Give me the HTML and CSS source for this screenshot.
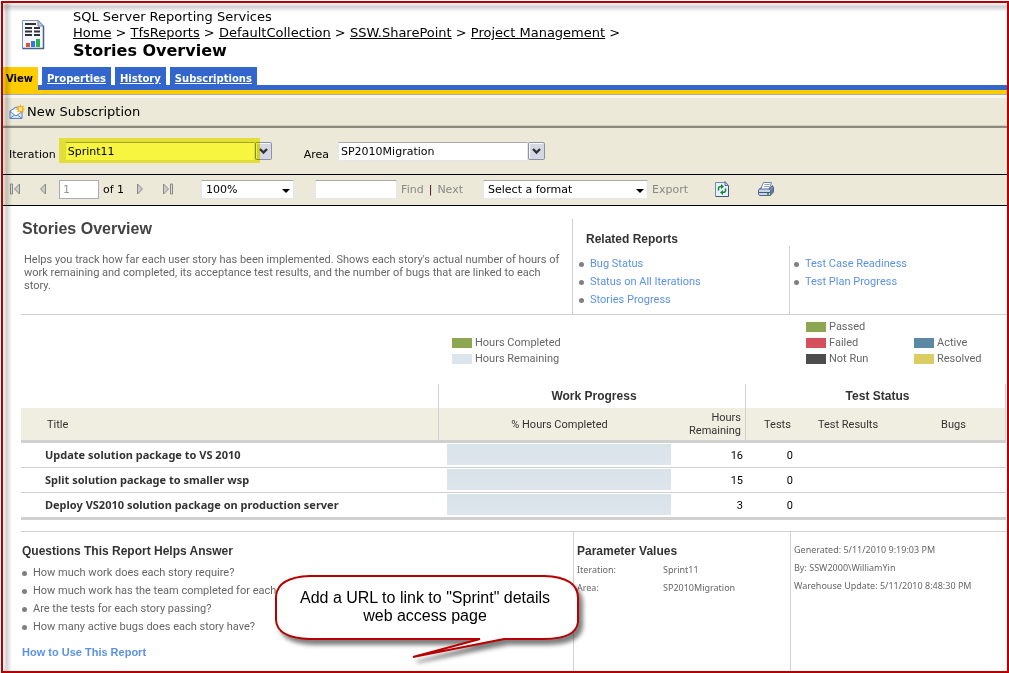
FILE: index.html
```html
<!DOCTYPE html>
<html lang="en">
<head>
<meta charset="utf-8">
<title>Stories Overview - SQL Server Reporting Services</title>
<link rel="stylesheet" href="styles.css">
</head>
<body>
<div class="frame">
  <header class="site-header">
    <svg class="report-icon" viewBox="0 0 24 31" aria-hidden="true">
      <path d="M1.500 1.500H17L22.500 7V29.500H1.500Z" fill="#f4f7ff" stroke="#7f93c0"/>
      <path d="M22.500 7V29.500H1.500" fill="none" stroke="#4a608c" stroke-width="1.500"/>
      <path d="M17 1.500V7H22.500Z" fill="#c3d0e8" stroke="#6d80a8"/>
      <path d="M4 5H15M4 9H11M4 12.500H11M4 16H11M13 9H19M13 12.500H19M13 16H19" stroke="#333" stroke-width="1.800"/>
      <path d="M5 24H9V28H5Z" fill="#e8502a"/><path d="M10 22H14V28H10Z" fill="#2b7be0"/><path d="M15 20H19V28H15Z" fill="#2fae4a"/>
    </svg>
    <div>
      <p class="site-name">SQL Server Reporting Services</p>
      <nav class="crumbs" aria-label="Breadcrumb"><a href="#">Home</a> &gt; <a href="#">TfsReports</a> &gt; <a href="#">DefaultCollection</a> &gt; <a href="#">SSW.SharePoint</a> &gt; <a href="#">Project Management</a> &gt;</nav>
      <h1 class="page-title">Stories Overview</h1>
    </div>
  </header>

  <nav class="tabs" aria-label="Report">
    <a class="tab tab-active" href="#">View</a>
    <a class="tab" href="#">Properties</a>
    <a class="tab" href="#">History</a>
    <a class="tab" href="#">Subscriptions</a>
  </nav>

  <div class="actions">
    <button class="action" type="button">
      <svg class="mail-icon" viewBox="0 0 16 16" aria-hidden="true">
        <path d="M1 7L7 3L13 7V14.500H1Z" fill="#d9e8fa" stroke="#5a82bd"/>
        <path d="M3 6H11V10L7 12L3 10Z" fill="#fff"/>
        <path d="M1 7.500L7 12L13 7.500M1 14.500L5.500 11M13 14.500L8.500 11" fill="none" stroke="#5a82bd"/>
        <path d="M11.500 0L12.500 2.500L15 1.500L14 4L16 5L14 6.200L15 8.500L12.500 7.500L11.500 10L10.500 7.500L8 8.500L9 6.200L7 5L9 4L8 1.500L10.500 2.500Z" fill="#f3a71e"/>
        <circle cx="11.500" cy="5" r="2" fill="#ffec7a"/>
      </svg>
      New Subscription
    </button>
  </div>

  <form class="params">
    <div class="param param-marked">
      <label for="iteration">Iteration</label>
      <span class="combo">
        <select id="iteration"><option>Sprint11</option></select>
        <svg class="combo-button" viewBox="0 0 17 18" aria-hidden="true"><rect x=".5" y=".5" width="16" height="17" rx="1" fill="#d5d7e4" stroke="#8c91a5"/><path d="M1.500 16V1.500H15" fill="none" stroke="#f7f8fc"/><path d="M5 7L8.500 10.500L12 7" fill="none" stroke="#333" stroke-width="2.400"/></svg>
      </span>
    </div>
    <div class="param">
      <label for="area">Area</label>
      <span class="combo">
        <select id="area"><option>SP2010Migration</option></select>
        <svg class="combo-button" viewBox="0 0 17 18" aria-hidden="true"><rect x=".5" y=".5" width="16" height="17" rx="1" fill="#d5d7e4" stroke="#8c91a5"/><path d="M1.500 16V1.500H15" fill="none" stroke="#f7f8fc"/><path d="M5 7L8.500 10.500L12 7" fill="none" stroke="#333" stroke-width="2.400"/></svg>
      </span>
    </div>
  </form>

  <div class="toolbar">
    <div class="pager">
      <button type="button" aria-label="First page"><svg width="12" height="12" viewBox="0 0 12 12"><path d="M1.500 1H3.500V11H1.500Z" fill="#ddd" stroke="#888"/><path d="M10.500 1V11L5.500 6Z" fill="#ccc" stroke="#888"/></svg></button>
      <button type="button" aria-label="Previous page"><svg width="12" height="12" viewBox="0 0 12 12"><path d="M8.500 1V11L3.500 6Z" fill="#ccc" stroke="#888"/></svg></button>
      <input class="field page-field" type="text" value="1" aria-label="Page">
      <span class="page-count">of 1</span>
      <button type="button" aria-label="Next page"><svg width="12" height="12" viewBox="0 0 12 12"><path d="M3.500 1V11L8.500 6Z" fill="#ccc" stroke="#888"/></svg></button>
      <button type="button" aria-label="Last page"><svg width="12" height="12" viewBox="0 0 12 12"><path d="M8.500 1H10.500V11H8.500Z" fill="#ddd" stroke="#888"/><path d="M1.500 1V11L6.500 6Z" fill="#ccc" stroke="#888"/></svg></button>
    </div>
    <span class="drop zoom-drop">
      <select aria-label="Zoom"><option>100%</option></select>
      <svg class="drop-arrow" viewBox="0 0 8 4" aria-hidden="true"><path d="M0 0H8L4 4Z"/></svg>
    </span>
    <div class="search">
      <input class="field find-field" type="text" aria-label="Find text">
      <button class="text-button" type="button">Find</button><span class="divider">|</span><button class="text-button" type="button">Next</button>
    </div>
    <div class="export">
      <span class="drop format-drop">
        <select aria-label="Export format"><option>Select a format</option></select>
        <svg class="drop-arrow" viewBox="0 0 8 4" aria-hidden="true"><path d="M0 0H8L4 4Z"/></svg>
      </span>
      <button class="text-button" type="button">Export</button>
    </div>
    <div class="tools">
      <button type="button" aria-label="Refresh"><svg width="14" height="16" viewBox="0 0 14 16"><path d="M.5 1.500H10L13.500 4.500V15.500H.5Z" fill="#e9effa" stroke="#7288b5"/><path d="M10 .5V4.500H13.500Z" fill="#c2cee4" stroke="#5f7097"/><path d="M13.500 5V15.500H1" fill="none" stroke="#425580"/><path d="M3.500 9.500V7.500Q3.500 5.500 6 5.500M10.500 7.500V9.500Q10.500 11.500 8 11.500" fill="none" stroke="#128a36" stroke-width="1.500"/><path d="M6 3L9 5.500L6 8ZM8 9L5 11.500L8 14Z" fill="#128a36"/></svg></button>
      <button type="button" aria-label="Print"><svg width="16" height="16" viewBox="0 0 16 16"><path d="M5.500 1.500H13.500L11 8.500H2.500Z" fill="#fff" stroke="#6b7fa3"/><path d="M6.500 3.500H11.500M5.800 5.500H10.800" stroke="#8fa2c4"/><path d="M1 8.500L3.500 6.500M11 8.500L14.500 4.500L15.500 7V11L12 14.500" fill="#8093b5" stroke="#4b5e83"/><path d="M.5 9Q1 8 2 8H11L12.500 9.500V14.500H1.500L.5 13Z" fill="#c9d5e9" stroke="#52668e"/><path d="M1 11.500H12" stroke="#435579"/><path d="M9 12H11V14H9Z" fill="#35a850"/><path d="M12.500 9.500L15.500 6.500V11L12.500 14.500Z" fill="#63779f"/></svg></button>
    </div>
  </div>

  <main class="report">
    <section class="intro">
      <div class="summary">
        <h2 class="report-title">Stories Overview</h2>
        <p class="summary-text">Helps you track how far each user story has been implemented. Shows each story's actual number of hours of work remaining and completed, its acceptance test results, and the number of bugs that are linked to each story.</p>
      </div>
      <div class="related">
        <h3 class="section-title">Related Reports</h3>
        <ul class="bullets">
          <li><a href="#">Bug Status</a></li>
          <li><a href="#">Status on All Iterations</a></li>
          <li><a href="#">Stories Progress</a></li>
        </ul>
      </div>
      <ul class="bullets related-more">
        <li><a href="#">Test Case Readiness</a></li>
        <li><a href="#">Test Plan Progress</a></li>
      </ul>
    </section>

    <div class="legends">
      <ul class="legend">
        <li><i class="swatch green"></i>Hours Completed</li>
        <li><i class="swatch pale"></i>Hours Remaining</li>
      </ul>
      <ul class="legend">
        <li><i class="swatch green"></i>Passed</li>
        <li><i class="swatch red"></i>Failed</li>
        <li><i class="swatch dark"></i>Not Run</li>
      </ul>
      <ul class="legend">
        <li><i class="swatch blue"></i>Active</li>
        <li><i class="swatch yellow"></i>Resolved</li>
      </ul>
    </div>

    <table class="stories">
      <colgroup><col><col class="col-chart"><col class="col-hours"><col class="col-tests"><col class="col-results"><col class="col-bugs"></colgroup>
      <thead>
        <tr class="groups"><td></td><th colspan="2">Work Progress</th><th colspan="3">Test Status</th></tr>
        <tr class="heads"><th class="title-head">Title</th><th class="group-start">% Hours Completed</th><th class="hours-head">Hours<br>Remaining</th><th class="group-start">Tests</th><th class="results-head">Test Results</th><th class="group-end">Bugs</th></tr>
      </thead>
      <tbody>
        <tr><th>Update solution package to VS 2010</th><td class="chart"><div class="bar"></div></td><td class="hours">16</td><td class="tests">0</td><td></td><td></td></tr>
        <tr><th>Split solution package to smaller wsp</th><td class="chart"><div class="bar"></div></td><td class="hours">15</td><td class="tests">0</td><td></td><td></td></tr>
        <tr><th>Deploy VS2010 solution package on production server</th><td class="chart"><div class="bar"></div></td><td class="hours">3</td><td class="tests">0</td><td></td><td></td></tr>
      </tbody>
    </table>

    <section class="details">
      <div class="questions">
        <h3 class="section-title">Questions This Report Helps Answer</h3>
        <ul class="bullets">
          <li>How much work does each story require?</li>
          <li>How much work has the team completed for each story?</li>
          <li>Are the tests for each story passing?</li>
          <li>How many active bugs does each story have?</li>
        </ul>
        <a class="how-to" href="#">How to Use This Report</a>
      </div>
      <div class="values">
        <h3 class="section-title">Parameter Values</h3>
        <dl class="pairs"><dt>Iteration:</dt><dd>Sprint11</dd><dt>Area:</dt><dd>SP2010Migration</dd></dl>
      </div>
      <div class="meta">
        <p>Generated: 5/11/2010 9:19:03 PM</p>
        <p>By: SSW2000\WilliamYin</p>
        <p>Warehouse Update: 5/11/2010 8:48:30 PM</p>
      </div>
    </section>
  </main>

  <aside class="callout">
    <svg class="callout-shape" viewBox="0 0 310 92" aria-hidden="true">
      <path d="M36 2H270Q304 3 304 24V48Q302 65 270 65H230L139 83L206 65H36Q3 64 2 46V22Q4 3 36 2Z" fill="#fff" stroke="#b80000" stroke-width="2"/>
    </svg>
    <p class="callout-text">Add a URL to link to "Sprint" details<br>web access page</p>
  </aside>
</div>
</body>
</html>
```
FILE: styles.css
```css
* { box-sizing: border-box; }

body {
  margin: 1px 0 0 1px;
  background: #fff;
  color: #000;
  font: 11px/13px "DejaVu Sans", Verdana, sans-serif;
}

h1, h2, h3, p, ul, dl, dd { margin: 0; padding: 0; }
ul { list-style: none; }

button {
  padding: 0;
  border: 0;
  background: none;
  color: inherit;
  font: inherit;
}
button svg { display: block; }

.frame {
  position: relative;
  display: flex;
  flex-direction: column;
  min-height: calc(100vh - 1px);
  border: 2px solid #b80000;
}
.frame::before,
.frame::after {
  content: "";
  position: absolute;
  top: 0;
  left: 0;
  pointer-events: none;
}
.frame::before {
  width: 9px;
  height: 100%;
  background: linear-gradient(90deg, rgba(0,0,0,.02), rgba(0,0,0,.18) 40%, rgba(0,0,0,0));
}
.frame::after {
  width: 100%;
  height: 9px;
  background: linear-gradient(rgba(0,0,0,.02), rgba(0,0,0,.18) 40%, rgba(0,0,0,0));
}

/* Header */
.site-header {
  display: flex;
  gap: 28px;
  padding: 6px 0 7px 18px;
  font-size: 13px;
  line-height: 16px;
}
.report-icon { width: 24px; height: 31px; margin-top: 10px; }
.crumbs a { color: #000; }
.page-title { font-size: 16px; line-height: 19px; }

/* Tabs */
.tabs {
  display: flex;
  gap: 4px;
  padding-bottom: 5px;
  background: linear-gradient(#36c, #36c) bottom / 100% 5px no-repeat;
  border-bottom: 4px solid #fc0;
}
.tab {
  height: 18px;
  padding: 0 5px;
  background: #36c;
  color: #fff;
  font-size: 10px;
  font-weight: bold;
  line-height: 23px;
}
.tab-active {
  height: 23px;
  margin-bottom: -5px;
  padding: 0 5px 0 3px;
  background: #fc0;
  color: #000;
  text-decoration: none;
}

/* Subscription bar */
.actions {
  padding: 7px 6px 4px;
  background: #ece9d8;
  border-top: 1px solid #aaa;
  border-bottom: 2px solid #8c8a80;
  box-shadow: inset 0 3px #f7f6ee, inset 0 -1px #d0cdbb;
}
.action {
  display: flex;
  align-items: center;
  gap: 2px;
  font-size: 13px;
  line-height: 20px;
}
.mail-icon { width: 16px; height: 16px; }

/* Parameters */
.params {
  display: flex;
  gap: 32px;
  padding: 13px 6px;
  background: #ece9d8;
  border-bottom: 1px solid #000;
}
.param {
  position: relative;
  display: flex;
  gap: 9px;
  height: 20px;
}
.param label { padding-top: 7px; }
.combo { display: flex; align-items: center; }
.combo select {
  appearance: none;
  width: 190px;
  height: 19px;
  padding: 0 2px;
  border: 1px solid #e3e6ee;
  border-top-color: #aaa;
  border-radius: 0;
  background: #fff;
  color: #000;
  font: inherit;
}
.combo-button { width: 17px; height: 18px; pointer-events: none; }
.param-marked::after {
  content: "";
  position: absolute;
  top: -3px;
  right: 12px;
  width: 201px;
  height: 25px;
  background: #f7f53f;
  mix-blend-mode: multiply;
  pointer-events: none;
}

/* Viewer toolbar */
.toolbar {
  display: flex;
  align-items: center;
  height: 31px;
  padding: 0 6px 2px;
  background: #ece9d8;
  border-bottom: 1px solid #000;
}
.pager, .search, .export, .tools { display: flex; align-items: center; }
.pager button + button { margin: 0 10px 0 16px; }
.page-count { margin: 0 10px 0 4px; }
.field {
  height: 19px;
  padding: 0 3px;
  border: 1px solid #e3e6ee;
  border-top-color: #aaa;
  font: inherit;
}
.page-field { width: 40px; border-color: #aab; color: #999; }
.find-field { width: 82px; }
.divider { margin: 0 1px; color: #402; }
.drop { position: relative; display: flex; }
.drop select {
  appearance: none;
  width: 100%;
  height: 19px;
  padding: 0 4px;
  border: 1px solid #e3e6ee;
  border-top-color: #aaa;
  border-radius: 0;
  background: #fff;
  color: #000;
  font: inherit;
}
.drop-arrow {
  position: absolute;
  top: 9px;
  right: 4px;
  width: 8px;
  height: 4px;
  pointer-events: none;
}
.zoom-drop { width: 93px; margin: 0 21px 0 17px; }
.format-drop { width: 165px; }
.text-button { padding: 0 4px; color: #888; }
.export { margin-left: 16px; }
.tools { gap: 29px; margin-left: 23px; }

/* Report */
.report {
  display: flex;
  flex: 1;
  flex-direction: column;
  padding-left: 18px;
  color: #666;
  font: 11px/13px Roboto, Tahoma, sans-serif;
}
.section-title {
  color: #333;
  font: bold 12px/14px "Liberation Sans", Arial, sans-serif;
}
.intro, .details { display: grid; }
.intro {
  grid-template-columns: 551fr 217fr 218fr;
  padding-top: 13px;
  border-bottom: 1px solid #d0d0d0;
}
.report-title {
  margin-left: 1px;
  color: #444;
  font: bold 16px/20px "Liberation Sans", Arial, sans-serif;
}
.summary-text { padding: 14px 10px 0 3px; }
.related { padding: 13px 0 5px; border-left: 1px solid #d0d0d0; }
.related .section-title { margin: 0 0 9px 13px; }
.bullets li {
  display: flex;
  align-items: center;
  gap: 6px;
  line-height: 18px;
}
.bullets li::before {
  content: "";
  width: 5px;
  height: 5px;
  border-radius: 50%;
  background: #808080;
}
.related .bullets { padding-left: 6px; }
.related-more {
  margin-top: 27px;
  padding: 9px 0 0 4px;
  border-left: 1px solid #d0d0d0;
}
.bullets a { color: #5b92e5; text-decoration: none; }

.legends {
  display: grid;
  grid-template-columns: 354fr 108fr 93fr;
  align-items: end;
  padding: 4px 0 17px 431px;
}
.legend li { display: flex; align-items: center; gap: 3px; line-height: 16px; }
.swatch { width: 20px; height: 10px; }
.green { background: #8da651; }
.pale { background: #dce5eb; }
.red { background: #d4505b; }
.dark { background: #4d4d4d; }
.blue { background: #5b88a5; }
.yellow { background: #dbcd63; }

.stories {
  width: calc(100% - 1px);
  border-collapse: separate;
  border-spacing: 0;
  table-layout: fixed;
}
.col-chart { width: 242px; }
.col-hours { width: 65px; }
.col-tests { width: 64px; }
.col-results { width: 93px; }
.col-bugs { width: 104px; }
.stories th, .stories td { padding: 0; }
.groups th {
  height: 24px;
  border-left: 1px solid #d0d0d0;
  color: #333;
  font: bold 12px/14px "Liberation Sans", Arial, sans-serif;
}
.groups th:last-child, .stories .group-end { border-right: 1px solid #d0d0d0; }
.stories .groups th { padding-left: 4px; }
.heads th {
  height: 35px;
  background: #f0eee1;
  border-bottom: 3px solid #d0d0d0;
  color: #333;
  font-weight: normal;
}
.stories .group-start { border-left: 1px solid #d0d0d0; }
.stories .title-head { padding-left: 26px; text-align: left; }
.stories .hours-head { padding-right: 4px; text-align: right; }
.stories .results-head { padding-right: 15px; }
.stories tbody th, .stories tbody td {
  height: 25px;
  border-bottom: 1px solid #d0d0d0;
  color: #000;
}
.stories tbody tr:last-child > * { height: 27px; border-bottom-width: 3px; }
.stories tbody th {
  padding: 0 0 2px 24px;
  color: #333;
  font-family: "Noto Sans", Tahoma, sans-serif;
  text-align: left;
}
.stories .chart { padding: 0 9px 2px; vertical-align: middle; }
.bar { height: 21px; background: linear-gradient(#d8e3e9, #dee5ed); }
.stories .hours { padding-right: 2px; text-align: right; }
.stories .tests { padding-right: 16px; text-align: right; }

.details {
  flex: 1;
  grid-template-columns: 552fr 217fr 217fr;
  margin-top: 11px;
  border-top: 1px solid #d0d0d0;
}
.questions { padding: 12px 0 10px 1px; }
.questions .bullets { margin: 6px 0 9px; }
.how-to {
  color: #5b92e5;
  font: bold 11px/14px "Liberation Sans", Arial, sans-serif;
  text-decoration: none;
}
.values, .meta {
  padding-left: 3px;
  border-left: 1px solid #d0d0d0;
  font: 9px/18px "Noto Sans", Tahoma, sans-serif;
}
.values { padding-top: 12px; }
.pairs { display: grid; grid-template-columns: 86px 1fr; padding-top: 3px; }
.meta { padding-top: 9px; }

/* Callout */
.callout { position: absolute; top: 571px; left: 271px; width: 310px; }
.callout-shape {
  display: block;
  width: 310px;
  height: 92px;
  overflow: visible;
  filter: drop-shadow(4px 5px 2px rgba(0,0,0,.5));
}
.callout-text {
  position: absolute;
  top: 15px;
  left: 0;
  width: 302px;
  font: 16px/18px "Liberation Sans", Arial, sans-serif;
  text-align: center;
}
```
